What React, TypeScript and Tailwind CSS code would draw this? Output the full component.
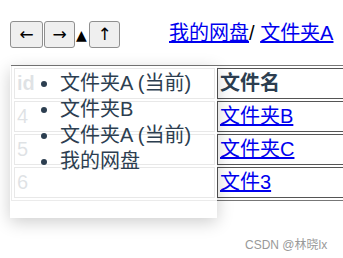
import React from 'react';

const rows = [
  { id: 4, name: '文件夹B' },
  { id: 5, name: '文件夹C' },
  { id: 6, name: '文件3' },
];

const history = ['文件夹A (当前)', '文件夹B', '文件夹A (当前)', '我的网盘'];

const NavButton: React.FC<{ label: string; w: string }> = ({ label, w }) => (
  <button
    className={`${w} h-[27px] flex items-center justify-center rounded-[3px] border border-[#8f8f8f] bg-[#efefef] text-[17px] text-black`}
    style={{ fontFamily: '"DejaVu Sans", sans-serif' }}
  >
    {label}
  </button>
);

const App: React.FC = () => {
  return (
    <div
      className="relative w-[343px] h-[258px] overflow-hidden bg-white text-[#2c3e50]"
      style={{ fontFamily: '"Liberation Sans", Arial, "Noto Sans CJK SC", sans-serif' }}
    >
      <div className="flex items-center pt-[21px] pl-[10px]">
        <div className="flex items-center gap-[1px]">
          <NavButton label="←" w="w-[33px]" />
          <NavButton label="→" w="w-[31px]" />
          <span
            className="w-[12px] text-[14px] leading-none text-black"
            style={{ fontFamily: '"DejaVu Sans", sans-serif' }}
          >
            ▲
          </span>
          <NavButton label="↑" w="w-[31px]" />
        </div>
        <div className="ml-[49px] -mt-[4px] text-[20px] whitespace-nowrap text-black">
          <a href="#" className="text-[#0000ee] underline">我的网盘</a>
          <span>/ </span>
          <a href="#" className="text-[#0000ee] underline">文件夹A</a>
        </div>
      </div>

      <table className="mt-[17px] ml-[11px] w-[420px] border-separate border-spacing-[2px] border border-[#777] text-[20px]">
        <tbody>
          <tr>
            <th className="w-[201px] h-[31px] border border-[#666] px-[2px] text-left font-bold leading-[27px]">id</th>
            <th className="h-[31px] border border-[#555] px-[2px] text-left font-bold leading-[27px]">文件名</th>
          </tr>
          {rows.map((r) => (
            <tr key={r.id}>
              <td className="h-[31px] border border-[#666] px-[2px] leading-[27px]">{r.id}</td>
              <td className="h-[31px] border border-[#555] px-[2px] leading-[27px]">
                <a href="#" className="text-[#0000ee] underline">{r.name}</a>
              </td>
            </tr>
          ))}
        </tbody>
      </table>

      {/* history dropdown over the table */}
      <div className="absolute left-[10px] top-[66px] w-[207px] h-[152px] bg-white/85 shadow-[0_4px_16px_rgba(0,0,0,0.2)]">
        <ul className="list-disc pl-[50px] pt-[4px] text-[20px] leading-[26px] text-[#2c3e50]">
          {history.map((h, i) => (
            <li key={i} className="whitespace-nowrap">{h}</li>
          ))}
        </ul>
      </div>

      <div className="absolute left-[245px] top-[236px] text-[12px] text-[#999]">CSDN @林晓lx</div>
    </div>
  );
};

export default App;
